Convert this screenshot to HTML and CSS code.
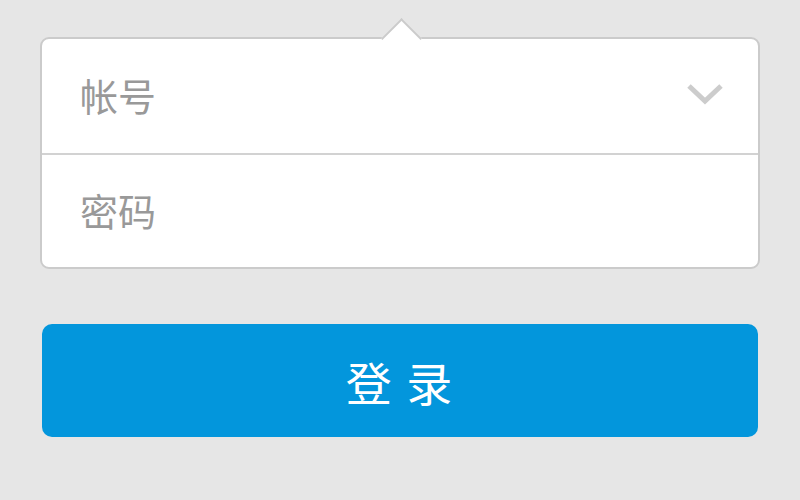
FILE: index.html
```html
<!DOCTYPE html>
<html lang="zh-CN">
<head>
  <meta charset="UTF-8">
  <title>登录</title>
  <link rel="stylesheet" href="styles.css">
</head>
<body>

  <div class="login">
    <div class="login-box">
      <div class="field">
        <input type="text" placeholder="帐号">
        <svg class="arrow-down" width="38" height="24" viewBox="0 0 38 24">
          <path d="M3 4 L19 19 L35 4" fill="none" stroke="#cccccc" stroke-width="5"/>
        </svg>
      </div>
      <div class="field">
        <input type="password" placeholder="密码">
      </div>
    </div>

    <button class="login-btn">登 录</button>
  </div>

</body>
</html>
```

FILE: styles.css
```css
* {
  box-sizing: border-box;
  font-family: "Noto Sans CJK SC", "Noto Sans", sans-serif;
}

body {
  margin: 0;
  background: #e6e6e6;
}

.login {
  padding: 37px 40px 0 40px;
}

.login-box {
  position: relative;
  background: #fff;
  border: 2px solid #cbcbcb;
  border-radius: 9px;
}

/* little pointer on top of the box */
.login-box::before {
  content: "";
  position: absolute;
  top: -15px;
  left: 345px;
  width: 27px;
  height: 27px;
  background: #fff;
  border-top: 2px solid #cbcbcb;
  border-left: 2px solid #cbcbcb;
  transform: rotate(45deg);
}

.field {
  display: flex;
  align-items: center;
  height: 114px;
  padding: 0 34px 4px 38px;
}

.field + .field {
  border-top: 2px solid #d2d2d2;
}

.field input {
  flex: 1;
  border: none;
  outline: none;
  background: transparent;
  font-size: 38px;
  color: #333;
  padding: 0;
}

.field input::placeholder {
  color: #999;
}

.arrow-down {
  display: block;
}

.login-btn {
  display: block;
  width: calc(100% - 4px);
  height: 113px;
  margin: 55px 0 0 2px;
  border: none;
  border-radius: 10px;
  background: #0396dc;
  color: #fff;
  font-size: 46px;
  letter-spacing: 2px;
  cursor: pointer;
}
```
